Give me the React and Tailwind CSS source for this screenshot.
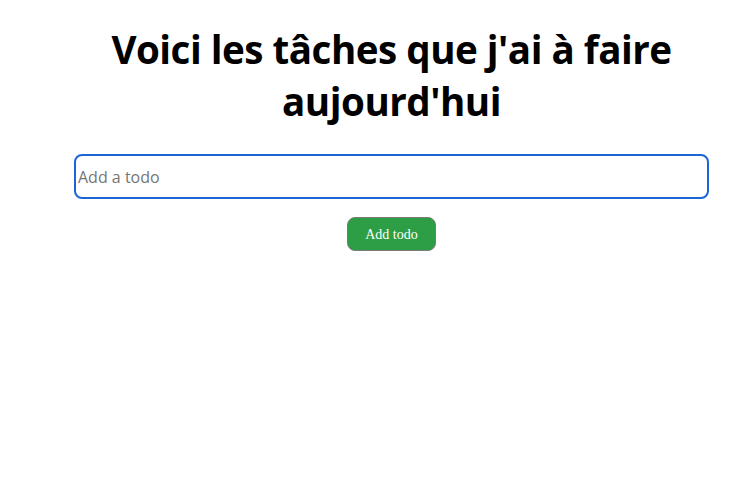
import React from 'react';

export default function App() {
    return (
        <div className="min-h-[504px] bg-white pl-[74px] pr-[27px] pt-[23px]" style={{ fontFamily: '"Open Sans", sans-serif' }}>
            <h1 className="text-center text-[38.6px] leading-[52px] font-bold text-black tracking-[-0.5px]">
                Voici les tâches que j'ai à faire aujourd'hui
            </h1>
            <div className="mt-[27px] flex flex-col items-center gap-[18px]">
                <input
                    autoFocus
                    type="text"
                    placeholder="Add a todo"
                    className="w-full h-[45px] rounded-[8px] border-2 border-[#1a66d6] px-[2px] text-[16px] text-black placeholder:text-[#767676] outline-none"
                />
                <button className="h-[34px] w-[89px] rounded-[8px] border border-[#7a7a7a] bg-[#2e9e46] text-[14px] text-white" style={{ fontFamily: '"Liberation Serif", serif' }}>
                    Add todo
                </button>
            </div>
        </div>
    );
}
